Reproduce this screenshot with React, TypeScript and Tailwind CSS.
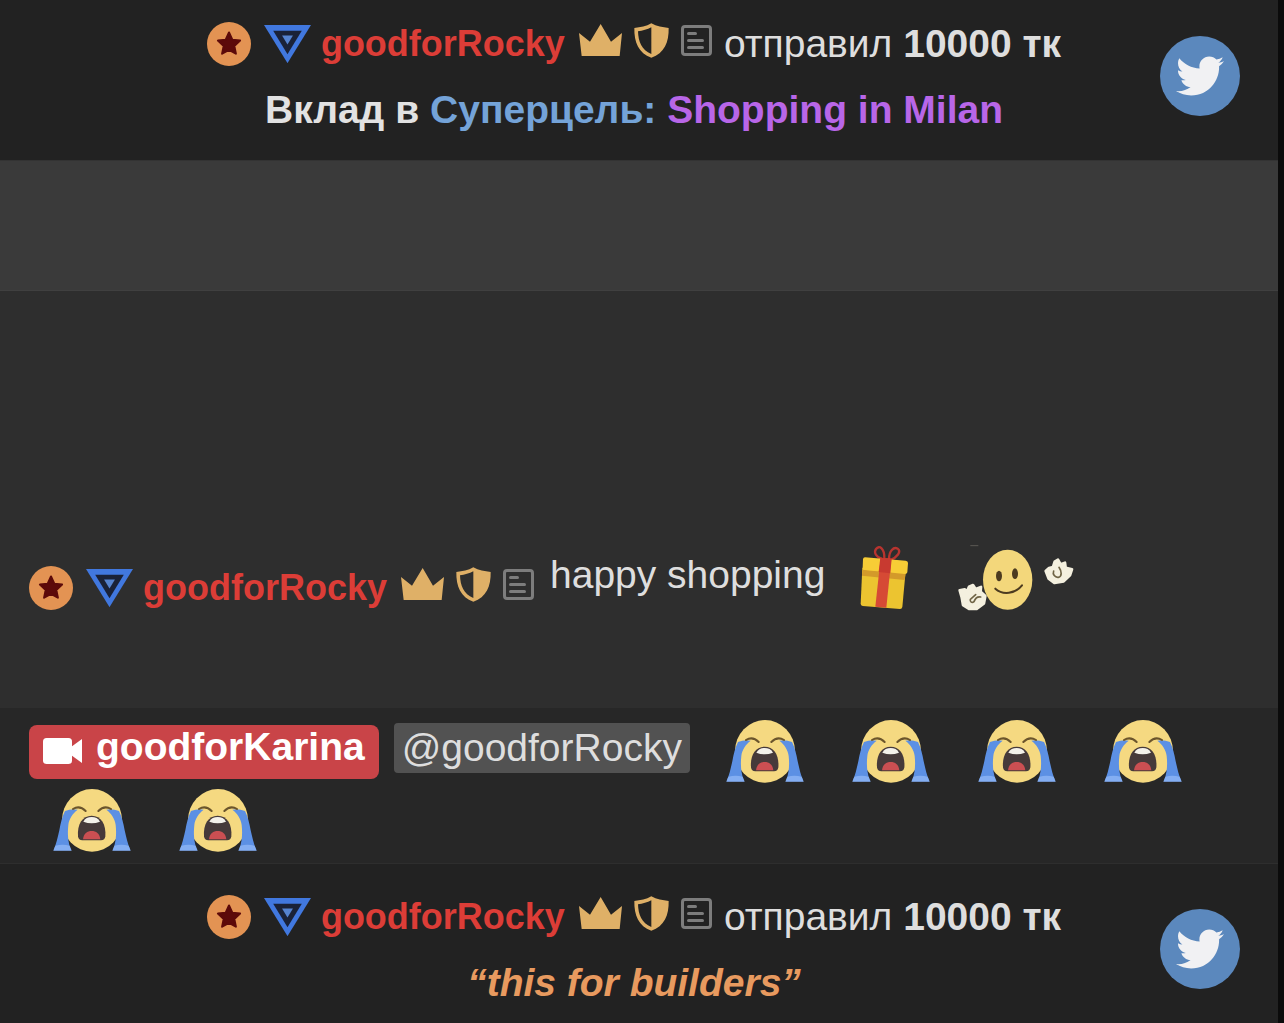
import { ReactNode } from 'react';
import { FaTwitter } from 'react-icons/fa';

interface TipMessageProps {
  children: ReactNode,
  spacing: string,
}

function StarBadge() {
  return (
    <svg viewBox="0 0 44 44" className="size-11 shrink-0" aria-hidden="true">
      <circle cx="22" cy="22" r="22" fill="#e39353" />
      <path
        d="M22 10.500l3.300 7.200 7.800.9-5.800 5.300 1.600 7.800-6.900-3.900-6.900 3.900 1.600-7.800-5.800-5.300 7.800-.9z"
        fill="#5c0a0a"
        stroke="#5c0a0a"
        strokeWidth="2"
        strokeLinejoin="round"
      />
    </svg>
  )
}

function TriangleBadge() {
  return (
    <svg viewBox="0 0 138 112" className="w-[47px] shrink-0" aria-hidden="true">
      <path d="M0 0h138L69 112z" fill="#4178df" />
      <path d="M27 17h84L69 86z" fill="#1a2238" />
      <path d="M53 31h32L69 57z" fill="#5583d0" />
    </svg>
  )
}

function CrownIcon() {
  return (
    <svg viewBox="0 0 129 96" className="w-[43px] shrink-0" aria-hidden="true">
      <path d="M0 27l33 26L65 0l31 53 33-26-7 69H8z" fill="#dfb067" />
    </svg>
  )
}

function ShieldIcon() {
  return (
    <svg viewBox="0 0 105 105" className="w-[35px] shrink-0" aria-hidden="true">
      <path
        fillRule="evenodd"
        d="M52 1c16 9 34 12 52 14 1 42-13 76-52 89C14 91 0 57 1 15 19 13 37 10 52 1zM52 13c-12 7-26 10-40 12 1 32 11 56 40 68z"
        fill="#dfb067"
      />
    </svg>
  )
}

function NotesIcon() {
  return (
    <svg viewBox="0 0 31 31" className="w-[31px] shrink-0" fill="none" stroke="#7d7d7d" aria-hidden="true">
      <rect x="1.500" y="1.500" width="28" height="28" rx="2.500" strokeWidth="3" />
      <path d="M7.500 8.500h7M7.500 15.500h14M7.500 22.500h14" strokeWidth="3" strokeLinecap="round" />
    </svg>
  )
}

function GiftEmoji() {
  return (
    <svg viewBox="56 40 150 204" className="w-[50px] shrink-0" role="img" aria-label="gift">
      <g fill="none" stroke="#b8342f" strokeWidth="7">
        <path d="M126 88c-20-6-26-20-19-30 10-13 26-2 25 28" />
        <path d="M146 88c0-24 14-38 26-31 12 9-2 26-22 34" />
      </g>
      <path d="M66 114l130 10-10 108q-1 6-7 6l-112-9q-6-1-6-7z" fill="#ecc430" />
      <path d="M66 120l130 9-3 22-128-13z" fill="#d39a2a" />
      <path d="M74 83l122 10q7 1 7 7l-2 28q-1 5-7 5L73 121q-7-1-6-7l1-26q1-5 6-5z" fill="#f7cd36" />
      <path d="M121 84l32 3-15 147-33-3z" fill="#d64a35" />
      <path d="M120 84l34 3-4 44-35-4z" fill="#c83a30" />
    </svg>
  )
}

function HugEmoji() {
  return (
    <svg viewBox="354 36 354 204" className="w-[118px] shrink-0" role="img" aria-label="waving smiley">
      <path d="M394 44h24" fill="none" stroke="#5c5955" strokeWidth="3" />
      <g fill="#f4f0df" stroke="#f4f0df" strokeWidth="8" strokeLinejoin="round">
        <path d="M362 178l15-3 7 6 6-14 12-5 8 12 16-6-1 14 14 13-4 22-22 17h-22l-19-12-4-23z" />
        <path d="M620 120l10-9 12-3 5-16 10-6 8 14 13-5 2 15 19 5-6 18-19 18-28 5-17-13z" />
      </g>
      <g fill="none" stroke="#6f6446" strokeWidth="5" strokeLinecap="round">
        <path d="M425 198c-10-2-17 6-20 14-6 5-13 1-11-7l16-14" />
        <path d="M644 120c-4 10 4 20 14 19 12-3 10-18 2-30" />
      </g>
      <ellipse cx="506" cy="146" rx="74" ry="90" fill="#f3d77b" />
      <ellipse cx="480" cy="135" rx="9" ry="16" fill="#4c3b20" />
      <ellipse cx="528" cy="128" rx="9" ry="16" fill="#4c3b20" />
      <path d="M469 173c22 20 60 16 80-10" fill="none" stroke="#4c3b20" strokeWidth="6" strokeLinecap="round" />
    </svg>
  )
}

function CryEmoji() {
  return (
    <span className="flex h-[69px] w-[126px] items-center justify-center">
      <svg viewBox="0 0 234 189" className="w-[78px]" role="img" aria-label="loudly crying face">
        <ellipse cx="117" cy="94" rx="90" ry="94" fill="#f5d981" />
        <path d="M36 66q20-8 38-4c-16 12-26 28-28 46-3 28-1 50 8 76H2c8-20 12-38 17-60 4-22 8-40 17-58z" fill="#5c90e4" />
        <path d="M198 66q-20-8-38-4c16 12 26 28 28 46 3 28 1 50-8 76h52c-8-20-12-38-17-60-4-22-8-40-17-58z" fill="#5c90e4" />
        <path d="M7 170q22-5 43 0l6 15H1z" fill="#84aef2" />
        <path d="M227 170q-22-5-43 0l-6 15h55z" fill="#84aef2" />
        <path d="M60 60q20-12 38 6M174 60q-20-12-38 6" fill="none" stroke="#6b552c" strokeWidth="6" strokeLinecap="round" />
        <path d="M75 142c-3-36 13-62 41-62s44 26 41 62c-1 8-5 12-13 12H88c-8 0-12-4-13-12z" fill="#463a3a" />
        <path d="M91 98c5-10 14-14 25-14s20 4 25 14q-25 10-50 0z" fill="#f4f1ea" />
        <path d="M90 151c2-18 13-25 26-25s24 7 26 25z" fill="#cb4f52" />
      </svg>
    </span>
  )
}

function VideoIcon() {
  return (
    <svg viewBox="0 0 39 26" className="mb-0.5 w-[39px] shrink-0" fill="#fff" aria-hidden="true">
      <rect width="29" height="26" rx="3.500" />
      <path d="M28 9l11-8v24l-11-8z" />
    </svg>
  )
}

function UserBadges() {
  return (
    <div className="flex items-center">
      <StarBadge />
      <span className="mr-2.5 ml-[13px]"><TriangleBadge /></span>
      <button type="button" className="text-4xl leading-11 font-bold text-[#dc3d37] hover:underline">
        goodforRocky
      </button>
      <span className="mb-2 ml-3.5 flex items-center gap-3">
        <CrownIcon />
        <ShieldIcon />
        <NotesIcon />
      </span>
    </div>
  )
}

function TipMessage({ children, spacing }: TipMessageProps) {
  return (
    <li className={`flex items-start bg-[#222] pr-[38px] pl-27 ${spacing}`}>
      <div className="flex flex-1 flex-col items-center gap-[22px]">
        <div className="flex items-center gap-3">
          <UserBadges />
          <p className="text-[39px] leading-11 text-[#dedede]">
            отправил <b>10000 тк</b>
          </p>
        </div>
        <p className="text-[39px] leading-11 font-bold">
          {children}
        </p>
      </div>
      <button
        type="button"
        aria-label="Twitter"
        className="mt-3.5 flex size-20 shrink-0 items-center justify-center rounded-full bg-[#5b88bd] hover:brightness-90"
      >
        <FaTwitter className="size-12 text-[#f1f1f3]" />
      </button>
    </li>
  )
}

export default function App() {
  return (
    <main className="bg-[#0b0b0b] pr-1.5 font-['Liberation_Sans',Arial,sans-serif]">
      <ul className="bg-[#2e2e2e]">
        <TipMessage spacing="pt-[22px] pb-7">
          <span className="text-[#e2e2e2]">Вклад в </span>
          <span className="text-[#74a3d8]">Суперцель: </span>
          <span className="text-[#b866e8]">Shopping in Milan</span>
        </TipMessage>

        <li className="h-[131px] border-y border-t-[#333] border-b-[#404040] bg-[#3a3a3a]" />

        <li className="flex items-start bg-[#2e2e2e] pt-[252px] pb-[97px] pl-[29px]">
          <div className="mt-[23px]">
            <UserBadges />
          </div>
          <p className="mt-2.5 ml-4 text-[39px] leading-11 text-[#dedede]">happy shopping</p>
          <span className="ml-[34px]"><GiftEmoji /></span>
          <span className="ml-12"><HugEmoji /></span>
        </li>

        <li className="flex flex-wrap items-center bg-[#272727] pt-[9px] pb-2 pl-[29px]">
          <button
            type="button"
            className="mr-[15px] flex items-center gap-3.5 rounded-lg bg-[#c94448] px-3.5 text-[39px] leading-11 font-bold text-white"
          >
            <VideoIcon />
            <span className="pb-2.5">goodforKarina</span>
          </button>
          <button
            type="button"
            className="mr-3 mb-2 rounded bg-[#525252] px-2 py-[3px] text-[39px] leading-11 text-[#dedede]"
          >
            @goodforRocky
          </button>
          <CryEmoji />
          <CryEmoji />
          <CryEmoji />
          <CryEmoji />
          <CryEmoji />
          <CryEmoji />
        </li>

        <TipMessage spacing="border-t border-[#2e2e2e] pt-[31px] pb-[18px]">
          <em className="text-[#e89a5f]">“this for builders”</em>
        </TipMessage>
      </ul>
    </main>
  )
}
